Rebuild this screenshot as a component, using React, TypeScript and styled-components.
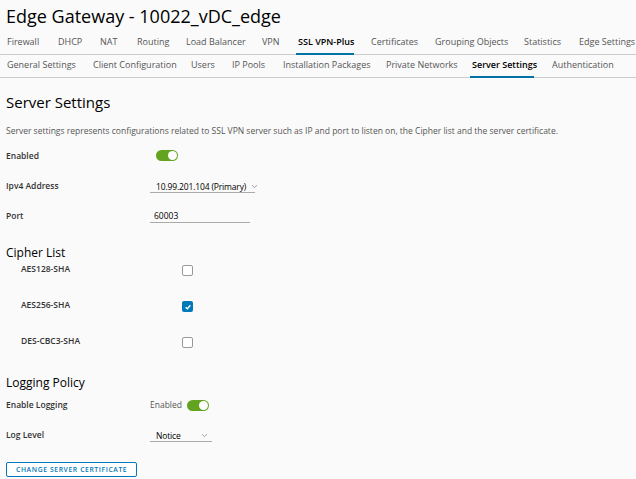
import React from 'react';
import styled, { createGlobalStyle } from 'styled-components';

const GlobalStyle = createGlobalStyle`
  html, body {
    margin: 0;
    padding: 0;
    background: #fafafa;
    font-family: "Open Sans", "Liberation Sans", sans-serif;
    color: #333;
  }
`;

const Page = styled.div`
  width: 636px;
  height: 479px;
  overflow: hidden;
  background: #fafafa;
`;

const Title = styled.h1`
  margin: 0;
  padding: 4px 0 0 6px;
  font-size: 18px;
  font-weight: 400;
  color: #000;
  line-height: 24px;
`;

const TabBar = styled.div`
  display: flex;
  height: 22px;
  border-bottom: 1px solid #ccc;
  padding-left: 7px;
  white-space: nowrap;
`;

const Tab = styled.div<{ $active?: boolean; $w: number; $u?: number }>`
  width: ${(p) => p.$w}px;
  flex: none;
  font-size: 9px;
  line-height: 20px;
  color: ${(p) => (p.$active ? '#000' : '#555')};
  font-weight: ${(p) => (p.$active ? 600 : 400)};
  position: relative;

  &::after {
    content: '';
    display: ${(p) => (p.$active ? 'block' : 'none')};
    position: absolute;
    left: -2px;
    bottom: -1px;
    height: 2px;
    background: #0072a3;
    width: ${(p) => p.$u || 0}px;
  }
`;

const Content = styled.div`
  padding: 0 6px;
`;

const Heading = styled.h2`
  margin: 0;
  padding-top: 14px;
  font-size: 15px;
  font-weight: 400;
  color: #000;
  line-height: 20px;
`;

const Description = styled.p`
  margin: 13px 0 0 0;
  font-size: 8.5px;
  color: #565656;
  line-height: 12px;
`;

const Row = styled.div<{ $h: number; $indent?: number }>`
  display: flex;
  height: ${(p) => p.$h}px;
  align-items: flex-start;
  padding-left: ${(p) => p.$indent || 0}px;
`;

const Label = styled.div<{ $w: number }>`
  width: ${(p) => p.$w}px;
  flex: none;
  font-size: 8.5px;
  font-weight: 600;
  color: #333;
  line-height: 12px;
`;

const Toggle = styled.div`
  width: 22px;
  height: 11px;
  border-radius: 6px;
  background: #62a420;
  position: relative;
  flex: none;

  &::after {
    content: '';
    position: absolute;
    right: 1px;
    top: 1px;
    width: 9px;
    height: 9px;
    border-radius: 50%;
    background: #fff;
  }
`;

const SelectBox = styled.div<{ $w: number; $spread?: boolean }>`
  width: ${(p) => p.$w}px;
  flex: none;
  height: 13px;
  border-bottom: 1px solid #aaa;
  display: flex;
  align-items: center;
  justify-content: ${(p) => (p.$spread ? 'space-between' : 'flex-start')};
  padding: 0 4px 0 6px;
  box-sizing: border-box;
  font-size: 8.5px;
  letter-spacing: -0.15px;
  color: #000;
  gap: 5px;
  white-space: nowrap;
  overflow: visible;
`;

const Chevron = styled.span`
  display: flex;
  flex: none;
`;

const InputBox = styled.div<{ $w: number }>`
  width: ${(p) => p.$w}px;
  height: 13px;
  border-bottom: 1px solid #aaa;
  padding-left: 4px;
  box-sizing: border-box;
  font-size: 8.5px;
  color: #000;
  line-height: 12px;
`;

const SubHeading = styled.h3<{ $top: number; $bottom?: number }>`
  margin: ${(p) => p.$top}px 0 ${(p) => p.$bottom || 0}px 0;
  font-size: 12px;
  font-weight: 400;
  color: #000;
  line-height: 16px;
`;

const Checkbox = styled.div<{ $checked?: boolean }>`
  width: 11px;
  height: 11px;
  margin-top: 2px;
  box-sizing: border-box;
  border-radius: 2px;
  border: ${(p) => (p.$checked ? 'none' : '1px solid #999')};
  background: ${(p) => (p.$checked ? '#0079b8' : '#fff')};
  display: flex;
  align-items: center;
  justify-content: center;
  flex: none;
`;

const Muted = styled.span`
  font-size: 8.5px;
  color: #565656;
  line-height: 12px;
  margin-right: 5px;
`;

const Button = styled.button`
  height: 15px;
  padding: 0 9px;
  border: 1px solid #0079b8;
  border-radius: 2px;
  background: #fff;
  color: #0079b8;
  font-family: inherit;
  font-size: 6.8px;
  font-weight: 600;
  letter-spacing: 0.6px;
  text-transform: uppercase;
  cursor: pointer;
`;

const ChevronIcon = () => (
  <svg width="7" height="5" viewBox="0 0 7 5">
    <path d="M1 1.2 L3.5 3.6 L6 1.2" fill="none" stroke="#999" strokeWidth="0.9" />
  </svg>
);

const CheckIcon = () => (
  <svg width="8" height="8" viewBox="0 0 8 8">
    <path d="M1.6 4.2 L3.3 5.8 L6.4 2.3" fill="none" stroke="#fff" strokeWidth="1.3" />
  </svg>
);

const topTabs: [string, number, number?][] = [
  ['Firewall', 51],
  ['DHCP', 42],
  ['NAT', 37],
  ['Routing', 49],
  ['Load Balancer', 76],
  ['VPN', 36],
  ['SSL VPN-Plus', 73, 58],
  ['Certificates', 64],
  ['Grouping Objects', 89],
  ['Statistics', 55],
  ['Edge Settings', 70],
];

const subTabs: [string, number, number?][] = [
  ['General Settings', 86],
  ['Client Configuration', 98],
  ['Users', 41],
  ['IP Pools', 51],
  ['Installation Packages', 103],
  ['Private Networks', 86],
  ['Server Settings', 80, 64],
  ['Authentication', 80],
];

const App: React.FC = () => {
  return (
    <Page>
      <GlobalStyle />
      <Title>Edge Gateway - 10022_vDC_edge</Title>
      <TabBar style={{ marginTop: 4 }}>
        {topTabs.map(([t, w, u]) => (
          <Tab key={t} $w={w} $active={!!u} $u={u}>
            {t}
          </Tab>
        ))}
      </TabBar>
      <TabBar>
        {subTabs.map(([t, w, u]) => (
          <Tab key={t} $w={w} $active={!!u} $u={u}>
            {t}
          </Tab>
        ))}
      </TabBar>
      <Content>
        <Heading>Server Settings</Heading>
        <Description>
          Server settings represents configurations related to SSL VPN server such as IP and port to listen on, the Cipher list and the server certificate.
        </Description>

        <Row $h={30} style={{ marginTop: 13 }}>
          <Label $w={150}>Enabled</Label>
          <Toggle />
        </Row>
        <Row $h={30}>
          <Label $w={144}>Ipv4 Address</Label>
          <SelectBox $w={105}>
            10.99.201.104 (Primary)
            <Chevron>
              <ChevronIcon />
            </Chevron>
          </SelectBox>
        </Row>
        <Row $h={30}>
          <Label $w={144}>Port</Label>
          <InputBox $w={100}>60003</InputBox>
        </Row>

        <SubHeading $top={5} $bottom={2}>Cipher List</SubHeading>
        <Row $h={36} $indent={15}>
          <Label $w={161}>AES128-SHA</Label>
          <Checkbox />
        </Row>
        <Row $h={36} $indent={15}>
          <Label $w={161}>AES256-SHA</Label>
          <Checkbox $checked>
            <CheckIcon />
          </Checkbox>
        </Row>
        <Row $h={36} $indent={15}>
          <Label $w={161}>DES-CBC3-SHA</Label>
          <Checkbox />
        </Row>

        <SubHeading $top={4}>Logging Policy</SubHeading>
        <Row $h={30} style={{ marginTop: 8 }}>
          <Label $w={144}>Enable Logging</Label>
          <Muted>Enabled</Muted>
          <Toggle style={{ marginTop: 1 }} />
        </Row>
        <Row $h={26}>
          <Label $w={144}>Log Level</Label>
          <SelectBox $w={62} $spread>
            Notice
            <Chevron>
              <ChevronIcon />
            </Chevron>
          </SelectBox>
        </Row>
        <Button>Change Server Certificate</Button>
      </Content>
    </Page>
  );
};

export default App;
